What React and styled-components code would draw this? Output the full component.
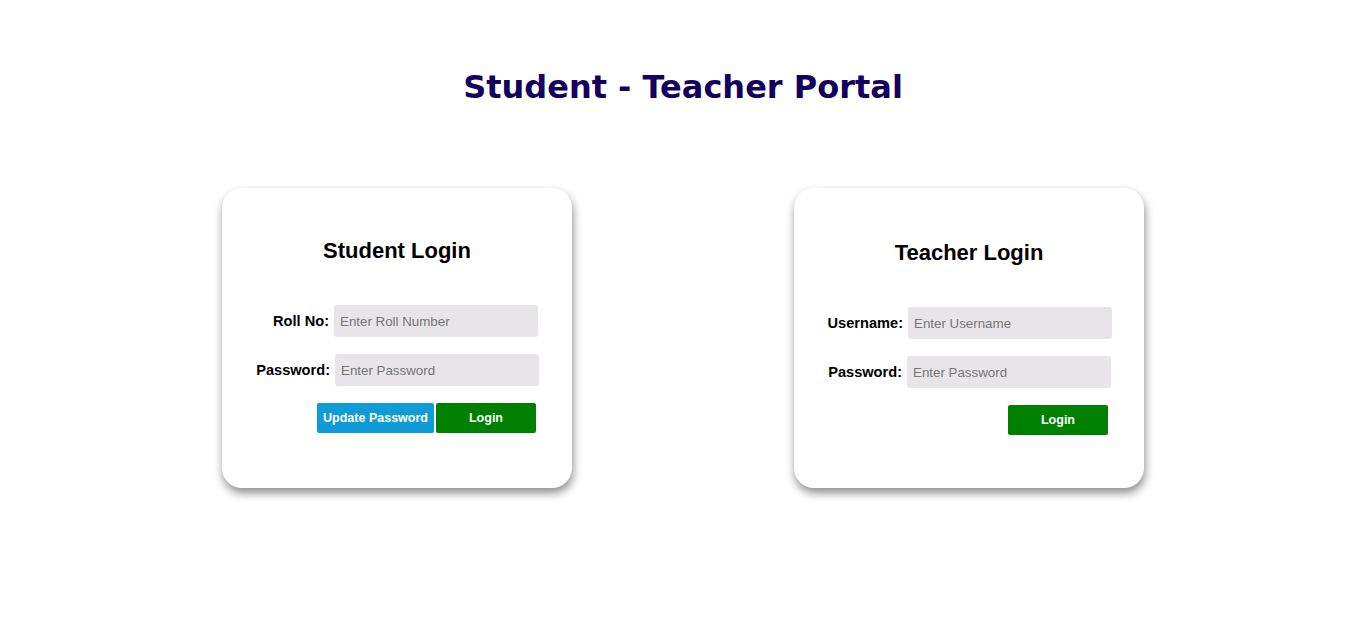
import React from "react";
import styled, { createGlobalStyle } from "styled-components";

const Global = createGlobalStyle`
  html, body { margin: 0; padding: 0; background: #ffffff; }
  body { font-family: "Liberation Sans", Arial, sans-serif; }
  input::placeholder { color: #767676; }
`;

const Page = styled.div`
  width: 1366px;
  min-height: 640px;
  display: flex;
  flex-direction: column;
  align-items: center;
`;

const Title = styled.h1`
  margin: 67px 0 0;
  font-family: "DejaVu Sans", Verdana, sans-serif;
  font-weight: bold;
  font-size: 32px;
  line-height: 40px;
  color: #14005f;
`;

const Cards = styled.div`
  margin-top: 81px;
  width: 100%;
  display: flex;
  justify-content: space-evenly;
`;

const Card = styled.div`
  width: 350px;
  height: 300px;
  box-sizing: border-box;
  padding: ${(p) => p.$top}px ${(p) => p.$right}px 0 0;
  background: #ffffff;
  border-radius: 20px;
  box-shadow: 1px 5px 10px rgba(0, 0, 0, 0.45);
  display: flex;
  flex-direction: column;
`;

const Heading = styled.h2`
  margin: 0 0 ${(p) => p.$gap}px ${(p) => p.$right}px;
  text-align: center;
  font-size: 22px;
  line-height: 26px;
  font-weight: bold;
  color: #000000;
`;

const Row = styled.div`
  display: flex;
  justify-content: flex-end;
  align-items: center;
  gap: 5px;
  margin-bottom: 17px;
  padding-right: ${(p) => p.$shift || 0}px;
`;

const Label = styled.label`
  font-size: 14.6px;
  font-weight: bold;
  color: #000000;
`;

const Input = styled.input`
  width: 204px;
  height: 32px;
  box-sizing: border-box;
  border: none;
  border-radius: 3px;
  background: #e7e5e7;
  padding: 0 6px;
  font-family: "Liberation Sans", Arial, sans-serif;
  font-size: 13.33px;
  outline: none;
`;

const Buttons = styled.div`
  display: flex;
  justify-content: flex-end;
  gap: 2px;
  padding-right: ${(p) => p.$shift}px;
`;

const Button = styled.button`
  height: 30px;
  width: ${(p) => p.$w}px;
  border: none;
  border-radius: 2px;
  padding: 0;
  background: ${(p) => p.$bg};
  color: #ffffff;
  font-family: "Liberation Sans", Arial, sans-serif;
  font-size: 12.5px;
  font-weight: bold;
  cursor: pointer;
`;

export default function App() {
  return (
    <>
      <Global />
      <Page>
        <Title>Student - Teacher Portal</Title>
        <Cards>
          <Card $top={50} $right={33}>
            <Heading $gap={41} $right={33}>Student Login</Heading>
            <Row $shift={1}>
              <Label>Roll No:</Label>
              <Input placeholder="Enter Roll Number" />
            </Row>
            <Row>
              <Label>Password:</Label>
              <Input type="password" placeholder="Enter Password" />
            </Row>
            <Buttons $shift={3}>
              <Button $w={117} $bg="#0f9bd5">Update Password</Button>
              <Button $w={100} $bg="#008000">Login</Button>
            </Buttons>
          </Card>
          <Card $top={52} $right={32}>
            <Heading $gap={41} $right={32}>Teacher Login</Heading>
            <Row>
              <Label>Username:</Label>
              <Input placeholder="Enter Username" />
            </Row>
            <Row $shift={1}>
              <Label>Password:</Label>
              <Input type="password" placeholder="Enter Password" />
            </Row>
            <Buttons $shift={4}>
              <Button $w={100} $bg="#008000">Login</Button>
            </Buttons>
          </Card>
        </Cards>
      </Page>
    </>
  );
}
